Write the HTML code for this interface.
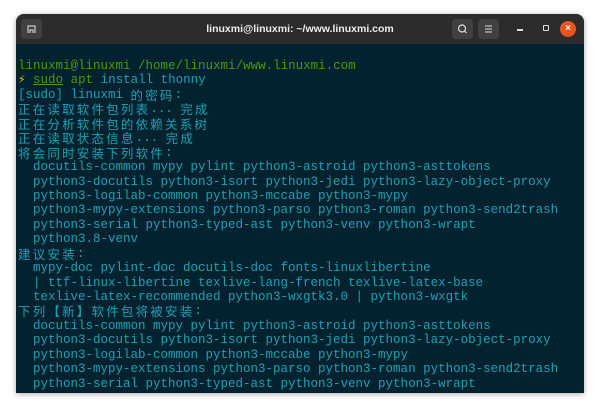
<!DOCTYPE html>
<html><head><meta charset="utf-8"><style>
body{margin:0;width:600px;height:411px;background:#fff;overflow:hidden;position:relative}
.win{position:absolute;left:16px;top:14px;width:568px;height:379px;border-radius:8px 8px 0 0;overflow:hidden;box-shadow:0 1px 6px rgba(0,0,0,.35);background:#02222f}
.tb{height:30px;background:#2c2c2c;position:relative;color:#eee;font:bold 10.5px "Liberation Sans","DejaVu Sans",sans-serif}
.tb .t{position:absolute;left:0;right:0;top:9px;text-align:center}
.btn{position:absolute;top:5px;width:21px;height:20px;background:#404040;border-radius:4px}
.term{position:absolute;font:12.5px "Liberation Mono","DejaVu Sans Mono",monospace;color:#20a0b4;white-space:normal}
.term div{height:14.45px;line-height:14.45px;white-space:pre}
.c{font-family:"Noto Sans CJK SC",sans-serif;letter-spacing:2.2px;line-height:14px;vertical-align:top}
.g{color:#4e9a06}
</style></head><body>
<div class="win">
<div class="tb">
<div class="btn" style="left:5px"><svg width="21" height="20"><path d="M7 14V7h7v7M9 14v-3h3v3" fill="none" stroke="#ccc" stroke-width="1.2"/></svg></div>
<div class="t">linuxmi@linuxmi: ~/www.linuxmi.com</div>
<div class="btn" style="left:436px"><svg width="21" height="20"><circle cx="10" cy="9.5" r="3.5" fill="none" stroke="#ddd" stroke-width="1.2"/><path d="M12.5 12l2 2" stroke="#ddd" stroke-width="1.2"/></svg></div>
<div class="btn" style="left:462px"><svg width="21" height="20"><path d="M7 7h7M7 10h7M7 13h7" stroke="#ddd" stroke-width="1.1"/></svg></div>
<div style="position:absolute;left:501px;top:15px;width:6px;height:1.5px;background:#ddd"></div>
<div style="position:absolute;left:527px;top:11px;width:4px;height:4px;border:1.3px solid #ddd;border-radius:1px"></div>
<div style="position:absolute;left:544px;top:7px;width:16px;height:16px;border-radius:50%;background:#e95420;color:#fff;font:bold 10px/16px sans-serif;text-align:center">×</div>
</div>
</div>
<div class="term" style="left:18px;top:59px">
<div><span class="g">linuxmi@linuxmi</span> <span class="g">/home/linuxmi/www.linuxmi.com</span></div>
<div><span style="color:#e5c100">⚡</span> <span class="g" style="text-decoration:underline">sudo</span> <span class="g">apt</span> install thonny</div>
<div>[sudo] linuxmi <span class="c">的密码</span>:</div>
<div><span class="c">正在读取软件包列表</span>... <span class="c">完成</span></div>
<div><span class="c">正在分析软件包的依赖关系树</span></div>
<div><span class="c">正在读取状态信息</span>... <span class="c">完成</span></div>
<div><span class="c">将会同时安装下列软件</span>:</div>
<div>  docutils-common mypy pylint python3-astroid python3-asttokens</div>
<div>  python3-docutils python3-isort python3-jedi python3-lazy-object-proxy</div>
<div>  python3-logilab-common python3-mccabe python3-mypy</div>
<div>  python3-mypy-extensions python3-parso python3-roman python3-send2trash</div>
<div>  python3-serial python3-typed-ast python3-venv python3-wrapt</div>
<div>  python3.8-venv</div>
<div><span class="c">建议安装</span>:</div>
<div>  mypy-doc pylint-doc docutils-doc fonts-linuxlibertine</div>
<div>  | ttf-linux-libertine texlive-lang-french texlive-latex-base</div>
<div>  texlive-latex-recommended python3-wxgtk3.0 | python3-wxgtk</div>
<div><span class="c">下列【新】软件包将被安装</span>:</div>
<div>  docutils-common mypy pylint python3-astroid python3-asttokens</div>
<div>  python3-docutils python3-isort python3-jedi python3-lazy-object-proxy</div>
<div>  python3-logilab-common python3-mccabe python3-mypy</div>
<div>  python3-mypy-extensions python3-parso python3-roman python3-send2trash</div>
<div>  python3-serial python3-typed-ast python3-venv python3-wrapt</div>
</div>
</body></html>
